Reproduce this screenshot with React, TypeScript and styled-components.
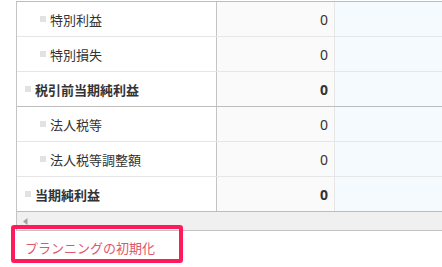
import React from "react";
import styled, { createGlobalStyle } from "styled-components";

const Global = createGlobalStyle`
  html, body { margin: 0; padding: 0; background: #fff; }
  body { font-family: "Noto Sans CJK JP", "Noto Sans", sans-serif; color: #333; overflow: hidden; }
`;

const Page = styled.div`
  position: relative;
  width: 442px;
  height: 267px;
  padding: 1px 0 0 16px;
  box-sizing: border-box;
`;

const Table = styled.div`
  border-left: 1px solid #c4c4c4;
  border-top: 1px solid #bdbdbd;
`;

const Row = styled.div<{ $bold?: boolean }>`
  display: grid;
  grid-template-columns: 200px 118px 1fr;
  height: 35px;
  box-sizing: border-box;
  border-bottom: 1px solid ${(p) => (p.$bold ? "#bdbdbd" : "#e6e6e6")};
  font-size: 13px;
  font-weight: ${(p) => (p.$bold ? 700 : 400)};
`;

const LabelCell = styled.div<{ $bold?: boolean }>`
  display: flex;
  align-items: center;
  gap: 4px;
  padding-left: ${(p) => (p.$bold ? 8 : 23)}px;
  border-right: 1px solid #c4c4c4;
  background: #fff;
  white-space: nowrap;
`;

const Bullet = styled.span`
  width: 6px;
  height: 6px;
  background: #e2e2e2;
  flex: none;
`;

const ValueCell = styled.div`
  display: flex;
  align-items: center;
  justify-content: flex-end;
  padding-right: 6px;
  background: #fafafa;
  border-right: 1px solid #e6e6e6;
  font-family: "Noto Sans", sans-serif;
  font-size: 14px;
`;

const PlanCell = styled.div`
  background: #f5faff;
`;

const ScrollBar = styled.div`
  height: 18px;
  background: #f0f0f0;
  border-bottom: 1px solid #c4c4c4;
  display: flex;
  align-items: center;
  padding-left: 6px;
`;

const Link = styled.a`
  display: block;
  margin: 7px 0 0 9px;
  font-size: 13px;
  line-height: 20px;
  color: #e0566b;
  text-decoration: none;
  cursor: pointer;
`;

const Highlight = styled.div`
  position: absolute;
  left: 11px;
  top: 225px;
  width: 172px;
  height: 38px;
  box-sizing: border-box;
  border: 4px solid #ff1a5c;
  border-radius: 3px;
  pointer-events: none;
`;

const rows: { label: string; bold?: boolean }[] = [
  { label: "特別利益" },
  { label: "特別損失" },
  { label: "税引前当期純利益", bold: true },
  { label: "法人税等" },
  { label: "法人税等調整額" },
  { label: "当期純利益", bold: true },
];

export default function App() {
  return (
    <>
      <Global />
      <Page>
        <Table>
          {rows.map((r) => (
            <Row key={r.label} $bold={r.bold}>
              <LabelCell $bold={r.bold}>
                <Bullet />
                {r.label}
              </LabelCell>
              <ValueCell>0</ValueCell>
              <PlanCell />
            </Row>
          ))}
          <ScrollBar>
            <svg width="5" height="7" viewBox="0 0 5 7">
              <path d="M4.5 0 L0 3.5 L4.5 7 Z" fill="#a3a3a3" />
            </svg>
          </ScrollBar>
        </Table>
        <Link>プランニングの初期化</Link>
        <Highlight />
      </Page>
    </>
  );
}
